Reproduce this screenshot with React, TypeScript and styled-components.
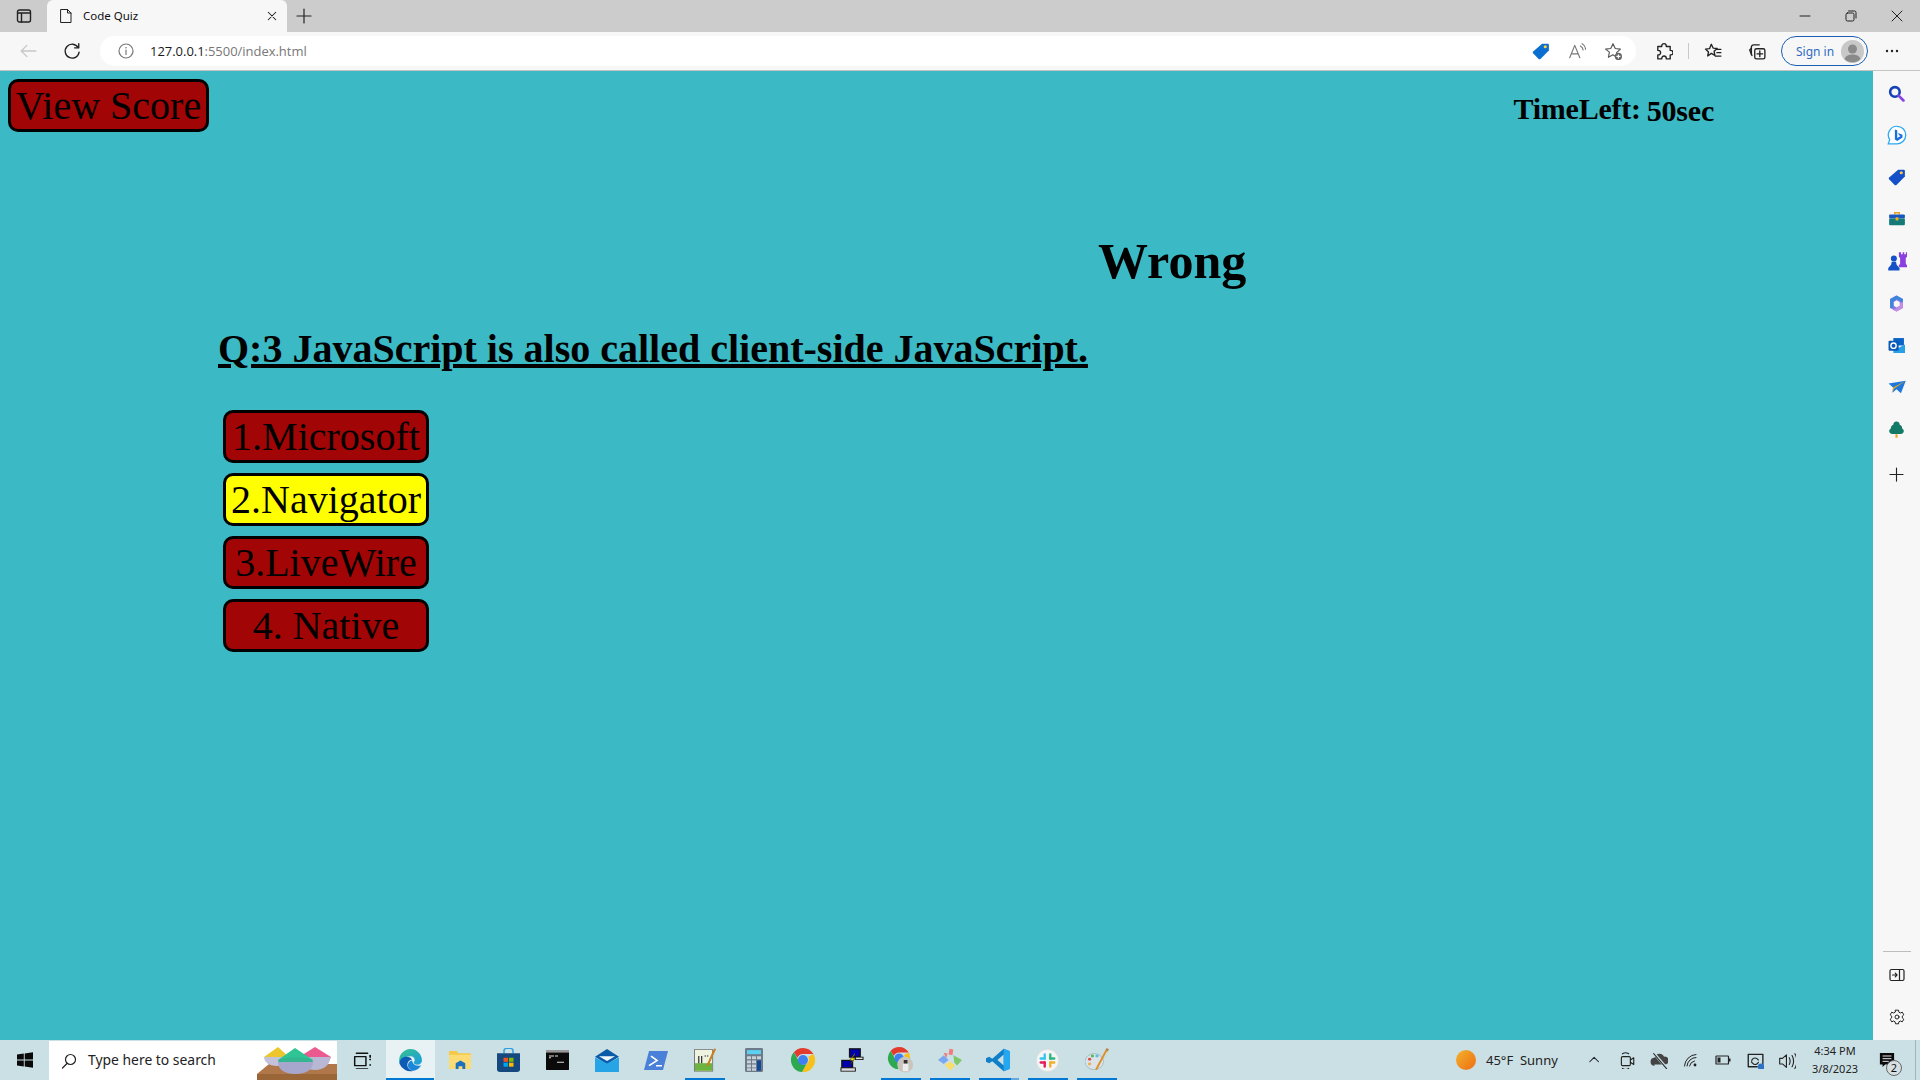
import React from "react";
import styled, { createGlobalStyle } from "styled-components";

const Global = createGlobalStyle`
  html, body { margin: 0; padding: 0; height: 100%; overflow: hidden; }
  #root { height: 100%; }
  * { box-sizing: border-box; }
`;

const uiFont = `"Noto Sans", "Open Sans", "Liberation Sans", sans-serif`;
const pageFont = `"Liberation Serif", "Times New Roman", serif`;

const Screen = styled.div`
  width: 1920px; height: 1080px; display: flex; flex-direction: column;
  font-family: ${uiFont}; background: #f7f7f7;
`;
const TabStrip = styled.div`
  height: 32px; background: #cccccc; display: flex; align-items: flex-end; flex: none;
`;
const TabToggle = styled.div`
  width: 47px; height: 32px; display: flex; align-items: center; justify-content: center;
`;
const Tab = styled.div`
  width: 240px; height: 32px; background: #f7f7f7; border-radius: 6px 6px 0 0;
  display: flex; align-items: center; padding: 0 9px 0 11px; color: #111;
`;
const TabTitle = styled.span`
  font-size: 11.5px; margin-left: 9px; flex: 1; padding-bottom: 1px;
`;
const NewTab = styled.div`
  width: 34px; height: 32px; display: flex; align-items: center; justify-content: center;
`;
const WindowControls = styled.div`
  margin-left: auto; display: flex; height: 32px;
`;
const WinButton = styled.div`
  width: 46px; height: 32px; display: flex; align-items: center; justify-content: center;
`;
const Toolbar = styled.div`
  height: 39px; flex: none; background: #f7f7f7; display: flex; align-items: center;
  border-bottom: 1px solid #c4c4c4;
`;
const NavSlot = styled.div<{ $w: number }>`
  width: ${p => p.$w}px; height: 30px; flex: none; display: flex; align-items: center; justify-content: center;
`;
const AddressBar = styled.div`
  width: 1536px; height: 30px; background: #fff; border-radius: 15px; display: flex; align-items: center;
  padding: 0 4px 0 18px; flex: none;
`;
const Url = styled.div`
  font-size: 13px; margin-left: 16px; color: #777; flex: 1; white-space: nowrap;
  font-family: "Open Sans", sans-serif; letter-spacing: -0.03px;
`;
const UrlHost = styled.span`
  color: #1a1a1a;
`;
const Separator = styled.div`
  width: 1px; height: 16px; background: #c9c9c9; flex: none;
`;
const SignIn = styled.div`
  width: 87px; height: 30px; border: 1px solid #1a5fb4; border-radius: 15px; flex: none;
  display: flex; align-items: center; justify-content: space-between; padding: 0 3px 0 14px;
  color: #2f6cc4; font-size: 12px;
`;
const Middle = styled.div`
  flex: 1; display: flex; min-height: 0;
`;
const Page = styled.main`
  flex: 1; background: #3bb9c4; color: #000; font-family: ${pageFont};
  display: flex; flex-direction: column;
`;
const TopRow = styled.div`
  display: flex; justify-content: space-between; padding: 8px 159px 0 8px;
`;
const Button = styled.button<{ $selected?: boolean }>`
  height: 53px; border: 3px solid #000; border-radius: 10px; padding: 0;
  background: ${p => (p.$selected ? "#ffff00" : "#a10505")}; color: #000;
  font-family: ${pageFont}; font-size: 40px; line-height: 1; text-align: center; display: block;
`;
const ScoreButton = styled(Button)`
  width: 201px;
`;
const Timer = styled.div`
  display: flex; gap: 6px; font-weight: bold; font-size: 30px; padding-top: 12px; line-height: 36px;
`;
const TimerLabel = styled.span`
  letter-spacing: -0.25px;
`;
const TimerValue = styled.span`
  position: relative; top: 1.5px; letter-spacing: -0.2px;
`;
const Feedback = styled.h1`
  margin: 100px 0 0 1098px; font-size: 50px; line-height: 58px; font-weight: bold;
`;
const Question = styled.h2`
  margin: 36px 0 0 218px; font-size: 40px; line-height: 46px; font-weight: bold; text-decoration: underline;
`;
const Answers = styled.div`
  margin: 38px 0 0 223px; display: flex; flex-direction: column; gap: 10px; width: 206px;
`;
const Sidebar = styled.aside`
  width: 47px; flex: none; background: #f7f7f7; display: flex; flex-direction: column; align-items: center;
  padding: 1px 0 2px;
`;
const SideSlot = styled.div`
  height: 42px; width: 47px; display: flex; align-items: center; justify-content: center; flex: none;
  &:nth-child(10) { margin-top: 3px; }
`;
const SideRule = styled.div`
  width: 28px; height: 1px; background: #bdbdbd; margin: auto 0 2px;
`;
const Taskbar = styled.footer`
  height: 40px; flex: none; background: #cbe0e5; display: flex; align-items: stretch;
`;
const StartSlot = styled.div`
  width: 49px; display: flex; align-items: center; justify-content: center; flex: none;
`;
const SearchBox = styled.div`
  width: 288px; margin-top: 1px; padding-left: 12px; display: flex; align-items: center; flex: none; gap: 11px;
  background: #fff; font-size: 13.9px; color: #222;
`;
const SearchText = styled.span`
  flex: 1; white-space: nowrap; padding-bottom: 2px;
`;
const PowdersWrap = styled.div`
  align-self: flex-end; height: 33px; flex: none; line-height: 0;
`;
const TaskSlot = styled.div<{ $active?: boolean; $running?: boolean; $stacked?: boolean }>`
  width: 49px; flex: none; display: flex; align-items: center; justify-content: center; position: relative;
  background: ${p => (p.$active ? "#e8f2f4" : "transparent")};
  &::after {
    content: ""; position: absolute; bottom: 0; height: 2px;
    left: ${p => (p.$active ? 0 : 4.5)}px; right: ${p => (p.$active ? 1 : 4.5)}px;
    background: ${p =>
      p.$stacked
        ? "linear-gradient(to right, #0078d4 80%, #63a8e0 80%)"
        : p.$active || p.$running
        ? "#0078d4"
        : "transparent"};
  }
`;
const Tray = styled.div`
  margin-left: auto; display: flex; align-items: center; color: #222; font-size: 13px; flex: none;
`;
const Weather = styled.span`
  margin-left: 10px; white-space: nowrap; width: 93px;
`;
const TraySlot = styled.div`
  width: 32px; display: flex; align-items: center; justify-content: center; flex: none;
`;
const Clock = styled.div`
  width: 62px; margin-left: 1px; text-align: center; font-size: 11px; line-height: 18px; flex: none;
`;
const Notif = styled.div`
  width: 42px; height: 40px; display: flex; align-items: center; justify-content: center; position: relative; flex: none;
  margin-right: 7px;
`;
const NotifBadge = styled.div`
  position: absolute; left: 20px; top: 20px; width: 16px; height: 16px; border-radius: 50%;
  background: #d6dfe2; border: 1px solid #666; font-size: 11px; line-height: 14px; text-align: center; color: #111;
`;
const ShowDesktop = styled.div`
  width: 5px; height: 40px; border-left: 1px solid #9fb4ba; flex: none;
`;

const S = { fill: "none", stroke: "#222", strokeWidth: 1.2, strokeLinecap: "round" as const, strokeLinejoin: "round" as const };

const Ico = ({ s = 16, children }: { s?: number; children: React.ReactNode }) => (
  <svg width={s} height={s} viewBox="0 0 16 16">{children}</svg>
);

const TabToggleIcon = () => <Ico><rect x="1.5" y="2" width="13" height="12" rx="2" {...S} strokeWidth={1.4} /><path d="M2 5h12M5.5 5v9" {...S} strokeWidth={1.4} /></Ico>;
const DocIcon = () => <Ico><path d="M3 1.5h6.5L13 5v9.5H3z M9.5 1.5V5H13" {...S} strokeWidth={1} /></Ico>;
const CloseIcon = ({ s = 12 }: { s?: number }) => <Ico s={s}><path d="M3 3l10 10M13 3L3 13" {...S} strokeWidth={s > 12 ? 1 : 1.4} /></Ico>;
const PlusIcon = ({ s = 16, c = "#222" }: { s?: number; c?: string }) => <Ico s={s}><path d="M8 1v14M1 8h14" {...S} stroke={c} /></Ico>;
const MinIcon = () => <Ico><path d="M3 8h10" {...S} strokeWidth={1} /></Ico>;
const RestoreIcon = () => <Ico><rect x="3" y="5" width="8" height="8" rx="1.5" {...S} strokeWidth={1} /><path d="M5.5 3h6A1.5 1.5 0 0 1 13 4.500V10" {...S} strokeWidth={1} /></Ico>;
const BackIcon = () => <Ico s={18}><path d="M15 8H2M7 3L2 8l5 5" {...S} stroke="#c8c8c8" /></Ico>;
const ReloadIcon = () => <Ico s={18}><path d="M13.5 5A6.2 6.2 0 1 0 14.3 9" {...S} /><path d="M14 1.5V5.2h-3.7" {...S} /></Ico>;
const InfoIcon = () => <Ico><circle cx="8" cy="8" r="7" {...S} stroke="#777" /><path d="M8 7v4.5" {...S} stroke="#777" /><circle cx="8" cy="4.7" r=".8" fill="#777" /></Ico>;
const TagIcon = ({ c = "#0a6fd0", dot = "#ffd23c", s = 18 }: { c?: string; dot?: string; s?: number }) => (
  <Ico s={s}><path d="M9 1.5h5a1 1 0 0 1 1 1v5L7.5 15a1.2 1.2 0 0 1-1.6 0L1 10a1.2 1.2 0 0 1 0-1.6z" fill={c} /><circle cx="11.8" cy="4.2" r="1.4" fill={dot} /></Ico>
);
const ReadIcon = () => <Ico s={18}><path d="M1.5 14L6 3l4.5 11M3 10.5h6" {...S} stroke="#777" strokeWidth={1} /><path d="M11 3.5c1.5.7 2.3 2 2.4 3.5M12.5 1.5c2 1 3 2.800 3.100 5" {...S} stroke="#777" strokeWidth={1} /></Ico>;
const StarAddIcon = () => <Ico s={18}><path d="M8 1.500l2 4.300 4.600.5-3.400 3.200.9 4.600L8 11.300 3.900 13.600l.9-4.600L1.400 6.300 6 5.800z" {...S} stroke="#555" strokeWidth={1} /><circle cx="12.800" cy="12.800" r="3.200" fill="#666" /><path d="M12.800 11v3.600M11 12.800h3.600" stroke="#fff" strokeWidth={1} /></Ico>;
const PuzzleIcon = () => <Ico s={18}><path d="M6 3.500a2 2 0 0 1 4 0V4h3.500v3.500h.5a2 2 0 0 1 0 4h-.5V15H10v-.6a2 2 0 0 0-4 0v.6H2.500v-3.500H3a2 2 0 0 0 0-4h-.5V4H6z" {...S} /></Ico>;
const FavListIcon = () => <Ico s={18}><path d="M6.500 2l1.600 3.400 3.600.4-2.700 2.500.7 3.600-3.200-1.800L3.300 12.400 4 8.800 1.300 6.300l3.600-.4z" {...S} /><path d="M11 6.500h4M11.500 9.500h3.500M10 12.500h5" {...S} /></Ico>;
const CollectionsIcon = () => <Ico s={18}><path d="M3 11V4.500A2 2 0 0 1 5 2.500h5" {...S} /><rect x="6" y="6" width="9" height="9" rx="1.500" {...S} /><path d="M10.500 8v5M8 10.500h5M3 5.500L1.500 7l2 5" {...S} /></Ico>;
const Avatar = () => <svg width="23" height="23" viewBox="0 0 23 23"><circle cx="11.500" cy="11.500" r="11.500" fill="#c8c8c8" /><circle cx="11.500" cy="9" r="4.500" fill="#8a8a8a" /><path d="M3.500 19c1.500-3.500 4.500-4.500 8-4.500s6.500 1 8 4.500a11.500 11.500 0 0 1-16 0z" fill="#8a8a8a" /></svg>;
const DotsIcon = () => <Ico><circle cx="3" cy="8" r="1.200" fill="#222" /><circle cx="8" cy="8" r="1.200" fill="#222" /><circle cx="13" cy="8" r="1.200" fill="#222" /></Ico>;

const SearchSide = () => <Ico s={17}><circle cx="6.500" cy="6.500" r="4.500" fill="none" stroke="#1440b8" strokeWidth="2.400" /><path d="M10 10l4.500 4.500" stroke="#8a45e0" strokeWidth="2.600" strokeLinecap="round" /></Ico>;
const BingSide = () => <Ico s={20}><path d="M8 1a7 7 0 0 1 0 14H1l1.200-3.200A7 7 0 0 1 8 1z" fill="#fff" stroke="#2aa8f0" strokeWidth="1" /><path d="M6.300 3.500l1.900.7v6.200l2.700-1.600-1.300-.7-.7-1.700 3.500 1.400v2.200L8.200 12.800 6.300 11.500z" fill="#1a6fe0" /></Ico>;
const ToolsSide = () => <Ico s={18}><path d="M6 4V2.500h4V4" fill="none" stroke="#e8a020" strokeWidth="1.300" /><rect x="1" y="4" width="14" height="3.500" rx=".8" fill="#1a56c0" /><rect x="1" y="7.500" width="14" height="6" rx=".8" fill="#147a78" /><rect x="6.800" y="6.500" width="2.400" height="2.800" fill="#f0b020" /></Ico>;
const ChessSide = () => <Ico s={20}><path d="M9.500 1h1.700v1.500h1.300V1h1.300v1.500h1.300V1H16v3.500l-1 1v4.500l1 1.500V13H9.500v-1.500l1-1.500V5.500l-1-1z" fill="#8b3fe0" /><circle cx="5.500" cy="6" r="2.400" fill="#1450c8" /><path d="M3.800 8.500h3.400l.5 2.500L10 13.500V15.500H1v-2L3.300 11z" fill="#1450c8" /></Ico>;
const M365Side = () => <Ico s={17}><path d="M8 .5l6 3.300v8.400l-6 3.300-6-3.300V3.800z" fill="#8a7be6" /><path d="M8 .5l6 3.300V7L8.500 4 5 6v6L2 12.200V3.800z" fill="#3d86dc" /><path d="M14 7v5.200L8 15.500 5 14l5.500-3V7.500z" fill="#c58ce2" /><path d="M8 5l3 1.700v3.300L8 11.700 5.500 10V6.700z" fill="#f7f7f7" /></Ico>;
const OutlookSide = () => <Ico s={17}><rect x="5" y="1" width="10" height="7" fill="#0a64c8" /><path d="M5 7l5 3 6-3v8H5z" fill="#28a0e8" /><rect x="0.500" y="3.500" width="9.500" height="9.500" rx="1" fill="#0a58b8" /><circle cx="5.200" cy="8.200" r="2.500" fill="none" stroke="#fff" strokeWidth="1.300" /></Ico>;
const PlaneSide = () => <Ico s={18}><path d="M.5 4.800L15.800 2.500 11.500 13.500 7.500 10 4 13l.5-4.500z" fill="#1e78dc" /><path d="M15.800 2.500L4.500 8.500 4 13l1.300-3.500z" fill="#f0a818" /></Ico>;
const TreeSide = () => <Ico s={17}><path d="M8 .5c2 0 3 1.500 3 3 1.500.5 2.500 2 2.300 3.500 1.500.8 2 2.500 1.200 3.800-.8 1.200-2.500 1.700-4 1.500h-5c-1.500.2-3.200-.3-4-1.500C.7 9.500 1.200 7.800 2.700 7 2.500 5.500 3.500 4 5 3.500 5 2 6 .5 8 .5z" fill="#137a68" /><rect x="7" y="12.500" width="2" height="3.200" fill="#f0a020" /></Ico>;
const PanelIcon = () => <Ico><rect x="1" y="2.500" width="14" height="11" rx="1.500" {...S} /><path d="M10.500 2.500v11M3.500 8H8M6.300 6.200L8 8 6.300 9.800" {...S} /></Ico>;
const GearIcon = () => <Ico><path d="M6.500 1.200h3l.4 2 1.500.8 1.900-.8 1.500 2.600-1.500 1.300v1.800l1.500 1.300-1.500 2.600-1.900-.8-1.500.8-.4 2h-3l-.4-2-1.500-.8-1.900.8-1.500-2.600 1.500-1.300V7.100L1.200 5.800 2.700 3.200l1.900.8L6.100 3.200z" {...S} strokeWidth={1} /><circle cx="8" cy="8" r="2" {...S} strokeWidth={1} /></Ico>;

const WinLogo = () => <Ico><path d="M0 2.500l6.800-1v6H0zM7.700 1.400L16 .2v7.300H7.700zM0 8.500h6.800v6l-6.800-1zM7.700 8.500H16v7.300l-8.300-1.200z" fill="#0a0a0a" /></Ico>;
const MagIcon = () => <Ico><circle cx="9.500" cy="6.500" r="5" {...S} /><path d="M6 10.500L1.500 15" {...S} /></Ico>;
const Powders = () => (
  <svg width="80" height="33" viewBox="0 0 80 33">
    <path d="M0 33v-6l12-10h68v16z" fill="#b0784a" /><path d="M0 27h80v6H0z" fill="#9a6638" />
    <path d="M42 10L58 0l16 10-2 4H44z" fill="#ea5a8e" /><path d="M42 10h31c0 8-6 13-15 13s-16-5-16-13z" fill="#b9b8d4" />
    <path d="M7 10L21 0l11 10z" fill="#ecc62c" /><path d="M7 10h26c0 5-5 9-13 9S7 15 7 10z" fill="#c3c2da" />
    <path d="M21 13L38 1l18 12z" fill="#2ec494" /><ellipse cx="38.500" cy="14" rx="17.500" ry="3.500" fill="#34b48f" /><path d="M21 15h35c0 8-7 12-17.500 12S21 23 21 15z" fill="#a7a6cc" />
  </svg>
);
const TaskViewIcon = () => <Ico s={18}><path d="M3 2h10M3 16h10M1.500 5h10v8h-10zM15 7.500h2M15 12.500h2" {...S} stroke="#111" strokeWidth={1.300} /><rect x="14.500" y="3.500" width="2.500" height="2.500" fill="#111" /></Ico>;
const EdgeIcon = () => (
  <svg width="25" height="25" viewBox="0 0 24 24"><defs><linearGradient id="eg" x1="0" y1="0" x2="1" y2="1"><stop offset="0" stopColor="#36c48e" /><stop offset="1" stopColor="#1a9ae0" /></linearGradient></defs>
    <path d="M12 1a11 11 0 0 1 11 11c0 2.500-2 4-4.500 4-2 0-3.500-.8-3.500-2 2-2 1-6-3-6-5 0-8.500 3-10.500 7A11 11 0 0 1 12 1z" fill="url(#eg)" />
    <path d="M1.500 15c0-4 3-6.500 6.500-6.500 2.800 0 4.700 1 5.500 2.800-2.500 0-4.500 2-4.500 5 0 2.500 2 5 6 5.500a11 11 0 0 1-13.500-6.800z" fill="#0d5bb5" />
    <path d="M15 21.800c-3.500-.5-5.500-2.800-5.500-5 0-2.500 1.500-4.500 4-4.800.5 2.500 2 5 6 5 1.500 0 2.500-.5 3-1a11 11 0 0 1-7.500 5.800z" fill="#1b86d8" /></svg>
);
const FolderIcon = () => <svg width="22" height="20" viewBox="0 0 23 21" preserveAspectRatio="none"><path d="M0 2a1 1 0 0 1 1-1h7l2 2.500H22a1 1 0 0 1 1 1V19a1 1 0 0 1-1 1H1a1 1 0 0 1-1-1z" fill="#f6c945" /><path d="M0 5h23v14a1 1 0 0 1-1 1H1a1 1 0 0 1-1-1z" fill="#fbdc74" /><path d="M7 20v-6l5-3 5 3v6h-3v-3h-4v3z" fill="#1d6fbf" /></svg>;
const StoreIcon = () => <svg width="23" height="24" viewBox="0 0 23 27" preserveAspectRatio="none"><path d="M7 6V3a2.500 2.500 0 0 1 2.500-2.500h4A2.500 2.500 0 0 1 16 3v3" fill="none" stroke="#2aa0e0" strokeWidth="1.500" /><path d="M0 6h23v18a3 3 0 0 1-3 3H3a3 3 0 0 1-3-3z" fill="#14487e" /><rect x="6.500" y="11" width="4.500" height="4.500" fill="#f25022" /><rect x="12" y="11" width="4.500" height="4.500" fill="#7fba00" /><rect x="6.500" y="16.500" width="4.500" height="4.500" fill="#00a4ef" /><rect x="12" y="16.500" width="4.500" height="4.500" fill="#ffb900" /></svg>;
const TerminalIcon = () => <svg width="23" height="20" viewBox="0 0 23 23" preserveAspectRatio="none"><rect width="23" height="23" rx="1" fill="#0a0a0a" /><rect x="0" y="0" width="23" height="3" fill="#999" /><path d="M3 7h5M3 9h2M9 7h3M11 14h7" stroke="#ddd" strokeWidth="1.200" /></svg>;
const MailIcon = () => <svg width="24" height="23" viewBox="0 0 24 27" preserveAspectRatio="none"><path d="M0 9L12 0l12 9-12 9z" fill="#0a5ba8" /><path d="M0 10l12 7 12-7v17H0z" fill="#26a4e6" /><path d="M4 8.500h16L12 14z" fill="#f2f7fb" /></svg>;
const PowerShellIcon = () => <svg width="24" height="19" viewBox="0 0 24 22" preserveAspectRatio="none"><path d="M5 0h19l-5 22H0z" fill="#4a80d8" /><path d="M7 6l6 5-8 6M12 17h6" fill="none" stroke="#fff" strokeWidth="1.800" /></svg>;
const NotesIcon = () => <svg width="22" height="24" viewBox="0 0 23 30" preserveAspectRatio="none"><rect x="0.500" y="2" width="19" height="27" fill="#eef3e0" stroke="#777" /><rect x="1" y="19" width="18" height="9.500" fill="#6db33f" /><path d="M5 10v9M8 10v9" stroke="#333" strokeWidth="1.300" /><path d="M11 10h5" stroke="#333" strokeWidth="1.300" strokeDasharray="1.500 1" /><path d="M22 1L14 22" stroke="#c67f22" strokeWidth="2.200" /></svg>;
const CalcIcon = () => <svg width="18" height="24" viewBox="0 0 18 29" preserveAspectRatio="none"><rect width="18" height="29" rx="1.500" fill="#6c7a89" /><rect x="2" y="2.500" width="14" height="5" fill="#5bd0f0" /><g fill="#c9d2d9"><rect x="2" y="10" width="4" height="3.500" /><rect x="7" y="10" width="4" height="3.500" /><rect x="12" y="10" width="4" height="3.500" /><rect x="2" y="15" width="4" height="3.500" /><rect x="7" y="15" width="4" height="3.500" /><rect x="2" y="20" width="4" height="3.500" /><rect x="7" y="20" width="4" height="3.500" /><rect x="2" y="24.500" width="4" height="3" /><rect x="7" y="24.500" width="4" height="3" /></g><rect x="12" y="15" width="4" height="12.500" fill="#134a96" /></svg>;
const ChromeMark = ({ s = 24 }: { s?: number }) => <svg width={s} height={s} viewBox="0 0 24 24"><path d="M12 0a12 12 0 0 1 10.400 6H12a6 6 0 0 0-5.600 3.800L2.800 4.300A12 12 0 0 1 12 0z" fill="#e33b2e" /><path d="M22.400 6A12 12 0 0 1 11 24l4.800-8.300A6 6 0 0 0 17.200 8.700z" fill="#f8c01a" /><path d="M11 24A12 12 0 0 1 2.800 4.300l5 8.700a5 5 0 0 0 7.800 2.800z" fill="#2da94f" /><circle cx="12" cy="12" r="5" fill="#3f80f0" /></svg>;
const PuttyIcon = () => <svg width="24" height="24" viewBox="0 0 25 29" preserveAspectRatio="none"><rect x="10" y="1" width="11" height="10" fill="#0000b0" stroke="#111" strokeWidth="1.500" /><rect x="2" y="15" width="11" height="9" fill="#0000b0" stroke="#111" strokeWidth="1.500" /><rect x="1" y="24" width="15" height="4" fill="#ddd" stroke="#111" /><rect x="16" y="11" width="8" height="3" fill="#ddd" stroke="#111" /><path d="M15 7l-5 8h3l-3 6 6-9h-3l3-5z" fill="#f4e20c" stroke="#111" strokeWidth=".6" /></svg>;
const ChromeProfile = () => <svg width="27" height="26" viewBox="0 0 27 28"><path d="M12 0a12 12 0 0 1 10.400 6H12a6 6 0 0 0-5.600 3.800L2.800 4.300A12 12 0 0 1 12 0z" fill="#e33b2e" /><path d="M22.400 6A12 12 0 0 1 22 18l-6-2a6 6 0 0 0 1.200-7.300z" fill="#f8c01a" /><path d="M11 24A12 12 0 0 1 2.800 4.300l5 8.700a5 5 0 0 0 7.800 2.800z" fill="#2da94f" /><circle cx="12" cy="12" r="5" fill="#3f80f0" /><circle cx="18.500" cy="19" r="8.500" fill="#c9c5bd" /><rect x="17" y="14" width="4" height="4" fill="#333" /><rect x="16" y="18" width="6" height="8" fill="#eee" /></svg>;
const GitIcon = () => <svg width="24" height="24" viewBox="0 0 25 30" preserveAspectRatio="none"><path d="M12 1l4 1-1 7-4-1z" fill="#f07c7c" /><path d="M6 6l4 1-1.500 6z" fill="#f07c7c" /><path d="M0 15l6-6 5 6-5 5z" fill="#7aa8f0" /><path d="M16 9l9 6-5 7-3-4z" fill="#7ec86a" /><path d="M7 21l5-4 6 5-5 6z" fill="#f8dc6c" /></svg>;
const VSCodeIcon = () => <svg width="25" height="24" viewBox="0 0 24 29" preserveAspectRatio="none"><path d="M17 1l6 3v21l-6 3L6 16l-3 2.500-3-2v-4l3-2 3 2.500z" fill="#0e7fc8" /><path d="M17 8l-6 6.500 6 6.500z" fill="#cbe0e5" /><path d="M17 1l6 3v21l-6 3z" fill="#25a8ef" /></svg>;
const SlackIcon = () => <svg width="23" height="23" viewBox="0 0 29 29"><circle cx="14.500" cy="14.500" r="14" fill="#f5f5f5" stroke="#ddd" /><g strokeWidth="3" strokeLinecap="round"><path d="M11 7v5" stroke="#36c5f0" /><path d="M6 12h5" stroke="#36c5f0" /><path d="M18 7v5" stroke="#2eb67d" /><path d="M18 12h5" stroke="#2eb67d" /><path d="M18 17v5" stroke="#ecb22e" /><path d="M18 17h5" stroke="#ecb22e" /><path d="M11 17v5" stroke="#e01e5a" /><path d="M6 17h5" stroke="#e01e5a" /></g></svg>;
const PaletteIcon = () => <svg width="24" height="24" viewBox="0 0 26 30" preserveAspectRatio="none"><ellipse cx="10" cy="17" rx="10" ry="10" fill="#dbe4ea" stroke="#8aa" strokeWidth=".7" /><circle cx="5" cy="14" r="1.800" fill="#d9534f" /><circle cx="8" cy="10" r="1.800" fill="#5cb85c" /><circle cx="13" cy="10" r="1.800" fill="#5bc0de" /><circle cx="5" cy="20" r="1.800" fill="#f0ad4e" /><path d="M24 1L12 27" stroke="#e0902a" strokeWidth="2.200" /><path d="M23 0l3 1.500L24 5z" fill="#a98150" /></svg>;

const SunDot = () => <svg width="20" height="20" viewBox="0 0 20 20"><defs><linearGradient id="sun" x1="0" y1="0" x2="1" y2="1"><stop offset="0" stopColor="#f2b32c" /><stop offset="1" stopColor="#ef6c12" /></linearGradient></defs><circle cx="10" cy="10" r="10" fill="url(#sun)" /></svg>;
const CaretIcon = () => <Ico s={14}><path d="M2 10l5-5 5 5" {...S} /></Ico>;
const CamIcon = () => <Ico s={18}><rect x="3" y="5" width="8" height="8" rx="1" {...S} strokeWidth={1} /><path d="M11 8l3-2v6l-3-2M4 2.500c1.500-1 4-1 5.500 0M4 15.500c1.500 1 4 1 5.500 0" {...S} strokeWidth={1} /></Ico>;
const CloudOff = () => <Ico s={18}><path d="M4 13a3.500 3.500 0 0 1 0-7 4.500 4.500 0 0 1 8.500-1 3.500 3.500 0 0 1 1 7H4z" fill="#444" /><path d="M3 1.500l12 14" stroke="#cbe0e5" strokeWidth="2.400" /><path d="M3 2l12 14" stroke="#222" strokeWidth="1" /></Ico>;
const WifiIcon = () => <Ico s={16}><path d="M1.500 14A12 12 0 0 1 13 2.500M4 14a9 9 0 0 1 9-8.500M6.500 14a6.500 6.500 0 0 1 5-5" {...S} strokeWidth={1} /><circle cx="12" cy="13" r="1.400" fill="#222" /></Ico>;
const BatteryIcon = () => <Ico s={16}><rect x="1" y="4" width="12.500" height="8" rx=".6" {...S} /><rect x="2.500" y="5.500" width="3" height="5" fill="#222" /><rect x="14" y="6.500" width="1.500" height="3" fill="#222" /></Ico>;
const SyncIcon = () => <Ico s={18}><path d="M2 3h13v8M2 3v11h8" {...S} /><path d="M5 9a3 3 0 0 1 5-2l1 1M11 10a3 3 0 0 1-5 1l-1-1" {...S} strokeWidth={1} /><circle cx="13.500" cy="14" r="3" fill="#2f72c4" /></Ico>;
const SpeakerIcon = () => <Ico s={18}><path d="M1.500 6.500h2.500l3.500-3v11l-3.500-3H1.500z" {...S} strokeWidth={1} /><path d="M10 6c1 1.500 1 4.500 0 6M12.500 4c1.800 2.800 1.800 7.200 0 10M15 2.500c2.400 3.800 2.400 9.200 0 13" {...S} strokeWidth={1} /></Ico>;
const NotifIcon = () => <svg width="16" height="16" viewBox="0 0 18 18"><path d="M1 1h16v13H7l-3 3v-3H1z" fill="#0a0a0a" /><path d="M4 4.500h10M4 7.500h10M4 10.500h7" stroke="#fff" strokeWidth="1" /></svg>;

const answers = ["1.Microsoft", "2.Navigator", "3.LiveWire", "4. Native"];

const sideIcons = [<SearchSide />, <BingSide />, <TagIcon c="#1450c8" dot="#ffc640" />, <ToolsSide />, <ChessSide />, <M365Side />, <OutlookSide />, <PlaneSide />, <TreeSide />, <PlusIcon s={15} />];

const tasks: { icon: React.ReactNode; active?: boolean; running?: boolean; stacked?: boolean }[] = [
  { icon: <TaskViewIcon /> },
  { icon: <EdgeIcon />, active: true },
  { icon: <FolderIcon /> },
  { icon: <StoreIcon /> },
  { icon: <TerminalIcon /> },
  { icon: <MailIcon /> },
  { icon: <PowerShellIcon /> },
  { icon: <NotesIcon />, running: true },
  { icon: <CalcIcon /> },
  { icon: <ChromeMark /> },
  { icon: <PuttyIcon /> },
  { icon: <ChromeProfile />, running: true },
  { icon: <GitIcon />, running: true },
  { icon: <VSCodeIcon />, running: true, stacked: true },
  { icon: <SlackIcon />, running: true },
  { icon: <PaletteIcon />, running: true },
];

export default function App() {
  return (
    <Screen>
      <Global />
      <TabStrip>
        <TabToggle><TabToggleIcon /></TabToggle>
        <Tab>
          <DocIcon />
          <TabTitle>Code Quiz</TabTitle>
          <CloseIcon />
        </Tab>
        <NewTab><PlusIcon /></NewTab>
        <WindowControls>
          <WinButton><MinIcon /></WinButton>
          <WinButton><RestoreIcon /></WinButton>
          <WinButton><CloseIcon s={16} /></WinButton>
        </WindowControls>
      </TabStrip>
      <Toolbar>
        <NavSlot $w={56}><BackIcon /></NavSlot>
        <NavSlot $w={32}><ReloadIcon /></NavSlot>
        <NavSlot $w={12} />
        <AddressBar>
          <InfoIcon />
          <Url><UrlHost>127.0.0.1</UrlHost>:5500/index.html</Url>
          <NavSlot $w={36}><TagIcon /></NavSlot>
          <NavSlot $w={35}><ReadIcon /></NavSlot>
          <NavSlot $w={38}><StarAddIcon /></NavSlot>
        </AddressBar>
        <NavSlot $w={4} />
        <NavSlot $w={48}><PuzzleIcon /></NavSlot>
        <Separator />
        <NavSlot $w={48}><FavListIcon /></NavSlot>
        <NavSlot $w={40}><CollectionsIcon /></NavSlot>
        <NavSlot $w={4} />
        <SignIn>Sign in<Avatar /></SignIn>
        <NavSlot $w={48}><DotsIcon /></NavSlot>
      </Toolbar>
      <Middle>
        <Page>
          <TopRow>
            <ScoreButton>View Score</ScoreButton>
            <Timer><TimerLabel>TimeLeft:</TimerLabel><TimerValue>50sec</TimerValue></Timer>
          </TopRow>
          <Feedback>Wrong</Feedback>
          <Question>Q:3 JavaScript is also called client-side JavaScript.</Question>
          <Answers>
            {answers.map((a, i) => (
              <Button key={a} $selected={i === 1}>{a}</Button>
            ))}
          </Answers>
        </Page>
        <Sidebar>
          {sideIcons.map((ic, i) => <SideSlot key={i}>{ic}</SideSlot>)}
          <SideRule />
          <SideSlot><PanelIcon /></SideSlot>
          <SideSlot><GearIcon /></SideSlot>
        </Sidebar>
      </Middle>
      <Taskbar>
        <StartSlot><WinLogo /></StartSlot>
        <SearchBox>
          <MagIcon />
          <SearchText>Type here to search</SearchText>
          <PowdersWrap><Powders /></PowdersWrap>
        </SearchBox>
        {tasks.map((t, i) => (
          <TaskSlot key={i} $active={t.active} $running={t.running} $stacked={t.stacked}>{t.icon}</TaskSlot>
        ))}
        <Tray>
          <SunDot />
          <Weather>45°F&nbsp;&nbsp;Sunny</Weather>
          <TraySlot><CaretIcon /></TraySlot>
          <TraySlot><CamIcon /></TraySlot>
          <TraySlot><CloudOff /></TraySlot>
          <TraySlot><WifiIcon /></TraySlot>
          <TraySlot><BatteryIcon /></TraySlot>
          <TraySlot><SyncIcon /></TraySlot>
          <TraySlot><SpeakerIcon /></TraySlot>
          <Clock>4:34 PM<br />3/8/2023</Clock>
          <Notif><NotifIcon /><NotifBadge>2</NotifBadge></Notif>
          <ShowDesktop />
        </Tray>
      </Taskbar>
    </Screen>
  );
}
